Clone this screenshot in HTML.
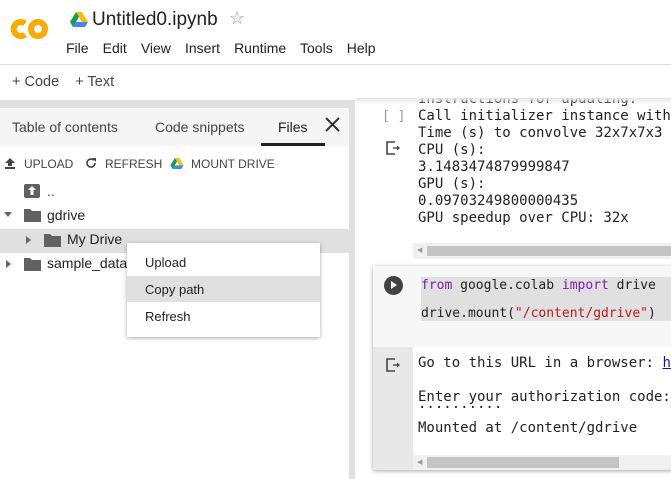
<!DOCTYPE html>
<html><head><style>
*{margin:0;padding:0;box-sizing:border-box}
body{width:671px;height:479px;overflow:hidden;background:#fff;font-family:"Liberation Sans",sans-serif;position:relative;color:#212121}
.a{position:absolute;white-space:nowrap}
.mono{font-family:"DejaVu Sans Mono","Liberation Mono",monospace;font-size:14px;color:#212121}
</style></head><body>
<!-- header -->
<svg class="a" style="left:8px;top:15px" width="44" height="28" viewBox="0 0 44 28"><path d="M17 8.5 A7 7 0 1 0 17 19.5" fill="none" stroke="#f9ab00" stroke-width="6"/><circle cx="30" cy="14" r="7" fill="none" stroke="#f9ab00" stroke-width="6"/></svg>
<svg class="a" style="left:70px;top:12px" width="18" height="15" viewBox="0 0 18 15"><path d="M6 0h6l6 10h-6z" fill="#fbbc04"/><path d="M6 0l3 5-6 10L0 10z" fill="#0f9d58"/><path d="M3 15l3-5h12l-3 5z" fill="#4285f4"/></svg>
<div class="a" style="left:92px;top:9px;font-size:19px;color:#212121">Untitled0.ipynb</div>
<div class="a" style="left:229px;top:8px;font-size:18px;color:#999">☆</div>
<div class="a" style="left:66px;top:40px;font-size:14px;word-spacing:0.8px">File&nbsp;&nbsp; Edit&nbsp;&nbsp; View&nbsp;&nbsp; Insert&nbsp;&nbsp; Runtime&nbsp;&nbsp; Tools&nbsp;&nbsp; Help</div>
<div class="a" style="left:0;top:64px;width:671px;height:1px;background:#ddd"></div>
<div class="a" style="left:12px;top:74px;font-size:14.5px;color:#444">+ Code&nbsp;&nbsp;&nbsp; + Text</div>
<!-- gray strip -->
<div class="a" style="left:0;top:100px;width:355px;height:379px;background:#e0e0e0"></div>
<!-- panel -->
<div class="a" style="left:0;top:108px;width:349px;height:371px;background:#fff"></div>
<div class="a" style="left:0;top:108px;width:349px;height:38px;background:#f5f5f5"></div>
<div class="a" style="left:12px;top:119px;font-size:14px;color:#444">Table of contents</div>
<div class="a" style="left:155px;top:119px;font-size:14px;color:#444">Code snippets</div>
<div class="a" style="left:278px;top:119px;font-size:14px;color:#212121">Files</div>
<div class="a" style="left:261px;top:143px;width:64px;height:3px;background:#212121"></div>
<svg class="a" style="left:325px;top:117px" width="15" height="15"><path d="M1 1L14 14M14 1L1 14" stroke="#333" stroke-width="2"/></svg>
<svg class="a" style="left:5px;top:158px" width="10" height="11"><path d="M5 0L0 5h3v3h4V5h3z M0 9h10v2H0z" fill="#444"/></svg>
<div class="a" style="left:24px;top:157px;font-size:12px;color:#444">UPLOAD</div>
<svg class="a" style="left:85px;top:157px" width="12" height="12" viewBox="0 0 12 12"><path d="M10 6A4 4 0 1 1 8.8 3.2" fill="none" stroke="#444" stroke-width="1.6"/><path d="M7 1h4v4z" fill="#444"/></svg>
<div class="a" style="left:105px;top:157px;font-size:12px;color:#444">REFRESH</div>
<svg class="a" style="left:170px;top:158px" width="14" height="11" viewBox="0 0 18 15"><path d="M6 0h6l6 10h-6z" fill="#fbbc04"/><path d="M6 0l3 5-6 10L0 10z" fill="#0f9d58"/><path d="M3 15l3-5h12l-3 5z" fill="#4285f4"/></svg>
<div class="a" style="left:191px;top:157px;font-size:12px;color:#444">MOUNT DRIVE</div>
<!-- tree -->
<div class="a" style="left:0;top:229px;width:349px;height:24px;background:#e0e0e0"></div>
<div class="a" style="left:24px;top:184px;width:16px;height:14px;background:#616161;border-radius:2px"></div>
<svg class="a" style="left:28px;top:186px" width="8" height="10"><path d="M4 0L0 4h2.5v5h3V4H8z" fill="#fff"/></svg>
<div class="a" style="left:47px;top:183px;font-size:14px;color:#444">..</div>
<svg class="a" style="left:4px;top:212px" width="8" height="5"><path d="M0 0h8L4 5z" fill="#666"/></svg>
<svg class="a" style="left:24px;top:208px" width="17" height="14"><path d="M0 1h6l2 2h9v11H0z" fill="#616161"/></svg>
<div class="a" style="left:47px;top:207px;font-size:14px">gdrive</div>
<svg class="a" style="left:26px;top:236px" width="5" height="8"><path d="M0 0v8l5-4z" fill="#666"/></svg>
<svg class="a" style="left:44px;top:233px" width="17" height="14"><path d="M0 1h6l2 2h9v11H0z" fill="#616161"/></svg>
<div class="a" style="left:67px;top:231px;font-size:14px">My Drive</div>
<svg class="a" style="left:6px;top:260px" width="5" height="8"><path d="M0 0v8l5-4z" fill="#666"/></svg>
<svg class="a" style="left:24px;top:257px" width="17" height="14"><path d="M0 1h6l2 2h9v11H0z" fill="#616161"/></svg>
<div class="a" style="left:47px;top:255px;font-size:14px">sample_data</div>
<!-- menu -->
<div class="a" style="left:127px;top:243px;width:193px;height:94px;background:#fff;box-shadow:0 1px 4px rgba(0,0,0,.35)"></div>
<div class="a" style="left:127px;top:276px;width:193px;height:26px;background:#e0e0e0"></div>
<div class="a" style="left:145px;top:255px;font-size:13px">Upload</div>
<div class="a" style="left:145px;top:282px;font-size:13px">Copy path</div>
<div class="a" style="left:145px;top:309px;font-size:13px">Refresh</div>
<!-- notebook -->
<div class="a" style="left:355px;top:98px;width:316px;height:140px;overflow:hidden">
<div class="a mono" style="left:63px;top:-7px;line-height:17px">Instructions for updating:<br>Call initializer instance with<br>Time (s) to convolve 32x7x7x3<br>CPU (s):<br>3.1483474879999847<br>GPU (s):<br>0.09703249800000435<br>GPU speedup over CPU: 32x</div>
<div class="a" style="left:0;top:0;width:316px;height:6px;background:linear-gradient(#e4e4e4,rgba(255,255,255,0))"></div>
</div>
<div class="a mono" style="left:382px;top:109px;color:#999;font-size:13px">[ ]</div>
<svg class="a" style="left:386px;top:141px" width="16" height="14"><path d="M9 1H1v12h8" fill="none" stroke="#444" stroke-width="1.6"/><path d="M7 7h5" stroke="#444" stroke-width="1.4"/><path d="M11 4.5l3 2.5-3 2.5z" fill="#444"/></svg>
<div class="a" style="left:413px;top:243px;width:258px;height:16px;background:#f0f0f0"></div>
<div class="a" style="left:427px;top:246px;width:244px;height:10px;background:#c4c4c4"></div>
<div class="a" style="left:417px;top:246px;font-size:7px;color:#999">◀</div>
<!-- cell -->
<div class="a" style="left:373px;top:266px;width:300px;height:204px;background:#f7f7f7;box-shadow:0 1px 4px rgba(0,0,0,.35)"></div>
<div class="a" style="left:384px;top:276px;width:19px;height:19px;border-radius:50%;background:#424242"></div>
<div class="a" style="left:391px;top:281px;width:0;height:0;border-left:6px solid #fff;border-top:4.5px solid transparent;border-bottom:4.5px solid transparent"></div>
<div class="a" style="left:421px;top:277px;width:250px;height:44px;background:#e0e0e0"></div>
<div class="a mono" style="left:421px;top:272px;line-height:28px;font-size:13px"><span style="color:#7b1fa2">from</span> google.colab <span style="color:#7b1fa2">import</span> drive<br>drive.mount(<span style="color:#b71c1c">"/content/gdrive"</span>)</div>
<div class="a" style="left:413px;top:347px;width:258px;height:123px;background:#fff"></div>
<div class="a" style="left:373px;top:347px;width:40px;height:123px;background:#e8e8e8"></div>
<svg class="a" style="left:386px;top:358px" width="16" height="14"><path d="M9 1H1v12h8" fill="none" stroke="#444" stroke-width="1.6"/><path d="M7 7h5" stroke="#444" stroke-width="1.4"/><path d="M11 4.5l3 2.5-3 2.5z" fill="#444"/></svg>
<div class="a mono" style="left:418px;top:355px;line-height:17px">Go to this URL in a browser: <span style="color:#1a0dab;text-decoration:underline">h</span></div>
<div class="a mono" style="left:418px;top:389px;line-height:17px">Enter your authorization code:</div>
<div class="a mono" style="left:418px;top:400px;line-height:17px">··········</div>
<div class="a mono" style="left:418px;top:420px;line-height:17px">Mounted at /content/gdrive</div>
<div class="a" style="left:413px;top:455px;width:258px;height:15px;background:#f0f0f0"></div>
<div class="a" style="left:427px;top:457px;width:192px;height:11px;background:#c4c4c4"></div>
<div class="a" style="left:417px;top:458px;font-size:7px;color:#999">◀</div>
</body></html>
